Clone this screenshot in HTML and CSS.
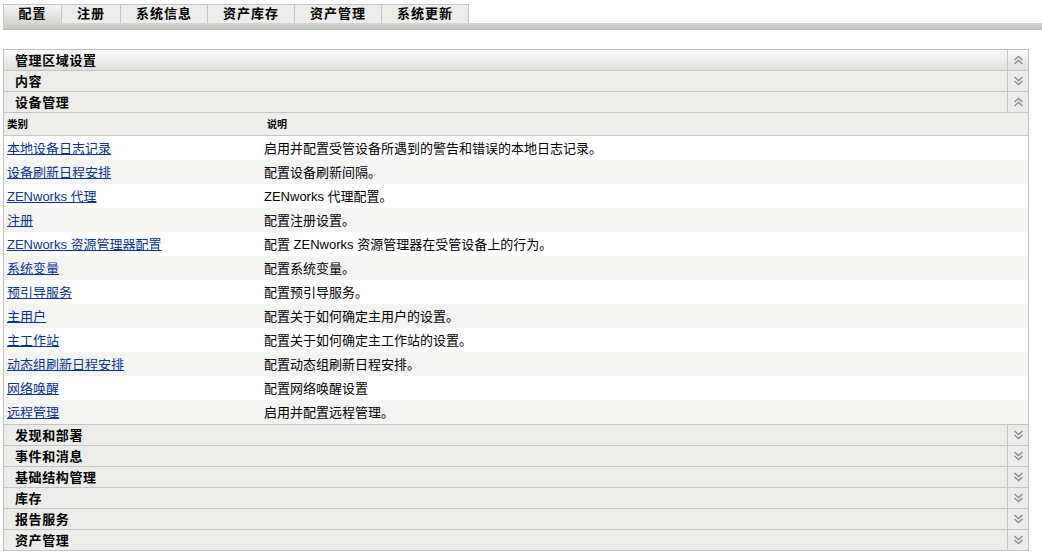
FILE: index.html
```html
<!DOCTYPE html>
<html lang="zh-CN">
<head>
    <meta charset="UTF-8">
    <title>配置</title>
    <link rel="stylesheet" href="styles.css">
</head>
<body>
    <div class="tabs">
        <div class="tab active">配置</div>
        <div class="tab">注册</div>
        <div class="tab wide">系统信息</div>
        <div class="tab wide">资产库存</div>
        <div class="tab wide">资产管理</div>
        <div class="tab wide">系统更新</div>
    </div>
    <div class="tab-strip"></div>

    <div class="panel">
        <div class="section top">
            <div class="section-title">管理区域设置</div>
            <div class="toggle"><svg width="11" height="10" viewBox="0 0 11 10"><path d="M1.5 5 L5.5 1.5 L9.5 5 M1.5 9 L5.5 5.5 L9.5 9" fill="none" stroke="#8a8a8a" stroke-width="1.4"/></svg></div>
        </div>
        <div class="section">
            <div class="section-title">内容</div>
            <div class="toggle"><svg width="11" height="10" viewBox="0 0 11 10"><path d="M1.5 1 L5.5 4.5 L9.5 1 M1.5 5 L5.5 8.5 L9.5 5" fill="none" stroke="#8a8a8a" stroke-width="1.4"/></svg></div>
        </div>
        <div class="section">
            <div class="section-title">设备管理</div>
            <div class="toggle"><svg width="11" height="10" viewBox="0 0 11 10"><path d="M1.5 5 L5.5 1.5 L9.5 5 M1.5 9 L5.5 5.5 L9.5 9" fill="none" stroke="#8a8a8a" stroke-width="1.4"/></svg></div>
        </div>

        <div class="settings">
            <div class="row head">
                <div class="col-name">类别</div>
                <div class="col-desc">说明</div>
            </div>
            <div class="row"><a href="#">本地设备日志记录</a><span>启用并配置受管设备所遇到的警告和错误的本地日志记录。</span></div>
            <div class="row"><a href="#">设备刷新日程安排</a><span>配置设备刷新间隔。</span></div>
            <div class="row"><a href="#">ZENworks 代理</a><span>ZENworks 代理配置。</span></div>
            <div class="row"><a href="#">注册</a><span>配置注册设置。</span></div>
            <div class="row"><a href="#">ZENworks 资源管理器配置</a><span>配置 ZENworks 资源管理器在受管设备上的行为。</span></div>
            <div class="row"><a href="#">系统变量</a><span>配置系统变量。</span></div>
            <div class="row"><a href="#">预引导服务</a><span>配置预引导服务。</span></div>
            <div class="row"><a href="#">主用户</a><span>配置关于如何确定主用户的设置。</span></div>
            <div class="row"><a href="#">主工作站</a><span>配置关于如何确定主工作站的设置。</span></div>
            <div class="row"><a href="#">动态组刷新日程安排</a><span>配置动态组刷新日程安排。</span></div>
            <div class="row"><a href="#">网络唤醒</a><span>配置网络唤醒设置</span></div>
            <div class="row"><a href="#">远程管理</a><span>启用并配置远程管理。</span></div>
        </div>

        <div class="section">
            <div class="section-title">发现和部署</div>
            <div class="toggle"><svg width="11" height="10" viewBox="0 0 11 10"><path d="M1.5 1 L5.5 4.5 L9.5 1 M1.5 5 L5.5 8.5 L9.5 5" fill="none" stroke="#8a8a8a" stroke-width="1.4"/></svg></div>
        </div>
        <div class="section">
            <div class="section-title">事件和消息</div>
            <div class="toggle"><svg width="11" height="10" viewBox="0 0 11 10"><path d="M1.5 1 L5.5 4.5 L9.5 1 M1.5 5 L5.5 8.5 L9.5 5" fill="none" stroke="#8a8a8a" stroke-width="1.4"/></svg></div>
        </div>
        <div class="section">
            <div class="section-title">基础结构管理</div>
            <div class="toggle"><svg width="11" height="10" viewBox="0 0 11 10"><path d="M1.5 1 L5.5 4.5 L9.5 1 M1.5 5 L5.5 8.5 L9.5 5" fill="none" stroke="#8a8a8a" stroke-width="1.4"/></svg></div>
        </div>
        <div class="section">
            <div class="section-title">库存</div>
            <div class="toggle"><svg width="11" height="10" viewBox="0 0 11 10"><path d="M1.5 1 L5.5 4.5 L9.5 1 M1.5 5 L5.5 8.5 L9.5 5" fill="none" stroke="#8a8a8a" stroke-width="1.4"/></svg></div>
        </div>
        <div class="section">
            <div class="section-title">报告服务</div>
            <div class="toggle"><svg width="11" height="10" viewBox="0 0 11 10"><path d="M1.5 1 L5.5 4.5 L9.5 1 M1.5 5 L5.5 8.5 L9.5 5" fill="none" stroke="#8a8a8a" stroke-width="1.4"/></svg></div>
        </div>
        <div class="section">
            <div class="section-title">资产管理</div>
            <div class="toggle"><svg width="11" height="10" viewBox="0 0 11 10"><path d="M1.5 1 L5.5 4.5 L9.5 1 M1.5 5 L5.5 8.5 L9.5 5" fill="none" stroke="#8a8a8a" stroke-width="1.4"/></svg></div>
        </div>
    </div>
</body>
</html>
```

FILE: styles.css
```css
body {
    margin: 0;
    font-family: "Liberation Sans", "Noto Sans CJK SC", sans-serif;
    font-size: 13px;
    color: #000;
    background-color: #fff;
}
.tabs {
    display: flex;
    padding: 4px 0 0 3px;
}
.tab {
    box-sizing: border-box;
    width: 59px;
    height: 19px;
    line-height: 16px;
    text-align: center;
    font-family: "Noto Sans CJK SC", sans-serif;
    font-weight: bold;
    font-size: 13px;
    letter-spacing: 1px;
    background-color: #ececea;
    border: 1px solid #c4c4c0;
    border-bottom: none;
    border-left: none;
}
.tab:first-child {
    border-left: 1px solid #c4c4c0;
}
.tab.wide {
    width: 87px;
}
.tab.active {
    background: linear-gradient(#f6f6f4, #d6d6d2);
}
.tab-strip {
    height: 6px;
    margin-left: 3px;
    background: linear-gradient(#d4d4d0, #c4c4c0);
    border-bottom: 1px solid #b8b8b4;
}
.panel {
    margin: 19px 13px 0 3px;
    border: 1px solid #c0c0c0;
    border-bottom: none;
}
.section {
    display: flex;
    height: 20px;
    background-color: #ececea;
    border-bottom: 1px solid #c4c4c0;
}
.section.top {
    background: linear-gradient(#fafaf8, #dededa);
}
.section-title {
    flex: 1;
    padding-left: 11px;
    line-height: 19px;
    font-family: "Noto Sans CJK SC", sans-serif;
    font-weight: bold;
    font-size: 13px;
    letter-spacing: 0.6px;
}
.toggle {
    width: 20px;
    border-left: 1px solid #c4c4c0;
    display: flex;
    align-items: center;
    justify-content: center;
}
.settings {
    border-bottom: 1px solid #c4c4c0;
}
.row {
    box-sizing: border-box;
    display: grid;
    grid-template-columns: 257px 1fr;
    height: 24px;
    align-items: center;
    padding: 0 0 2px 3px;
}
.row:nth-child(odd) {
    background-color: #f4f4f2;
}
.row:nth-child(even) {
    background-color: #fff;
}
.row.head {
    height: 23px;
    background-color: #eeeeec;
    border-bottom: 1px solid #c4c4c0;
    font-family: "Noto Sans CJK SC", sans-serif;
    font-weight: bold;
    font-size: 10.5px;
}
.row.head .col-desc {
    padding-left: 3px;
    font-size: 10px;
}
.row a {
    color: #0a3399;
    text-decoration: underline;
    justify-self: start;
}
```
